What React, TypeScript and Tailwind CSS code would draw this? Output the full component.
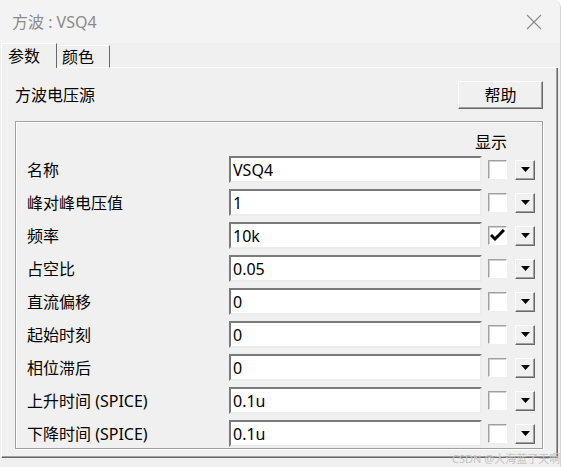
import React from "react";

const rows = [
  { label: "名称", value: "VSQ4", checked: false },
  { label: "峰对峰电压值", value: "1", checked: false },
  { label: "频率", value: "10k", checked: true },
  { label: "占空比", value: "0.05", checked: false },
  { label: "直流偏移", value: "0", checked: false },
  { label: "起始时刻", value: "0", checked: false },
  { label: "相位滞后", value: "0", checked: false },
  { label: "上升时间 (SPICE)", value: "0.1u", checked: false },
  { label: "下降时间 (SPICE)", value: "0.1u", checked: false },
];

const font = "font-['Noto_Sans','Noto_Sans_CJK_SC',sans-serif]";

const DropButton = () => (
  <div className="w-[20px] h-[20px] flex items-center justify-center bg-[#f0f0f0] border border-t-white border-l-white border-r-[#696969] border-b-[#696969] shadow-[inset_-1px_-1px_0_#a0a0a0]">
    <svg width="9" height="5" viewBox="0 0 9 5">
      <path d="M0 0 H9 L4.5 5 Z" fill="#000" />
    </svg>
  </div>
);

const CheckBox = ({ checked }: { checked: boolean }) => (
  <div className="w-[19px] h-[19px] bg-white border border-t-[#a0a0a0] border-l-[#a0a0a0] border-r-white border-b-white shadow-[inset_1px_1px_0_#d0d0d0] flex items-center justify-center">
    {checked && (
      <svg width="15" height="13" viewBox="0 0 15 13">
        <path d="M1 6 L5 10 L14 1" stroke="#000" strokeWidth="3" fill="none" />
      </svg>
    )}
  </div>
);

const ParamRow = ({ label, value, checked }: { label: string; value: string; checked: boolean }) => (
  <div className="flex items-center h-[27px]">
    <span className="w-[202px] text-[16px] text-black leading-none whitespace-nowrap">{label}</span>
    {/* text field */}
    <div className="w-[253px] h-[27px] bg-white border-2 border-t-[#7a7a7a] border-l-[#7a7a7a] border-r-[#ececec] border-b-[#ececec] flex items-center pl-[2px] text-[16px] leading-none text-black">
      {value}
    </div>
    <div className="ml-[6px]">
      <CheckBox checked={checked} />
    </div>
    <div className="ml-[8px]">
      <DropButton />
    </div>
  </div>
);

const App = () => {
  return (
    <div className={`w-[561px] h-[467px] bg-white ${font} relative`}>
      <div className="w-[561px] h-[467px] bg-[#f0f0f0] rounded-tr-[8px] border-r border-[#d4d4d4] overflow-hidden">
        {/* title bar */}
        <div className="h-[43px] flex items-center justify-between pl-[12px] pr-[18px] bg-[#f3f3f3]">
          <span className="text-[16px] text-[#8a8a8a] leading-none">方波 : VSQ4</span>
          <svg width="16" height="16" viewBox="0 0 16 16">
            <path d="M1 1 L15 15 M15 1 L1 15" stroke="#8a8a8a" strokeWidth="1.1" />
          </svg>
        </div>

        {/* tabs */}
        <div className="flex items-end h-[25px] ml-[1px] w-[557px]">
          <div className="w-[56px] h-[25px] border-l border-t border-white border-r border-r-[#696969] flex items-center pl-[6px] text-[16px] leading-none text-black">
            参数
          </div>
          <div className="w-[53px] h-[23px] border-t border-white border-b border-r border-r-[#696969] flex items-center pl-[5px] text-[16px] leading-none text-black">
            颜色
          </div>
          <div className="flex-1 border-b border-white" />
        </div>

        {/* tab panel */}
        <div className="ml-[1px] w-[557px] h-[390px] border-l border-white border-r border-r-[#696969] border-b border-b-[#696969] shadow-[inset_-1px_-1px_0_#a0a0a0] pl-[13px] pt-[13px]">
          <div className="flex items-center justify-between w-[528px]">
            <span className="text-[16px] leading-none text-black">方波电压源</span>
            <button className="w-[85px] h-[28px] bg-[#f0f0f0] border border-t-white border-l-white border-r-[#696969] border-b-[#696969] shadow-[inset_-1px_-1px_0_#a0a0a0] text-[16px] leading-none text-black">
              帮助
            </button>
          </div>

          {/* group box */}
          <div className="mt-[12px] w-[528px] h-[328px] border border-[#a0a0a0] shadow-[1px_1px_0_white,inset_1px_1px_0_white] pt-[10px] pl-[11px] pr-[7px]">
            <div className="flex justify-end pr-[28px] h-[20px] items-center">
              <span className="text-[16px] leading-none text-black">显示</span>
            </div>
            <div className="mt-[4px] flex flex-col gap-[6px]">
              {rows.map((r) => (
                <ParamRow key={r.label} label={r.label} value={r.value} checked={r.checked} />
              ))}
            </div>
          </div>
        </div>
      </div>

      {/* watermark */}
      <span className="absolute left-[452px] top-[453px] text-[11px] leading-none text-[#c4c4c4] whitespace-nowrap">
        CSDN @大海蓝了天啊
      </span>
    </div>
  );
};

export default App;
